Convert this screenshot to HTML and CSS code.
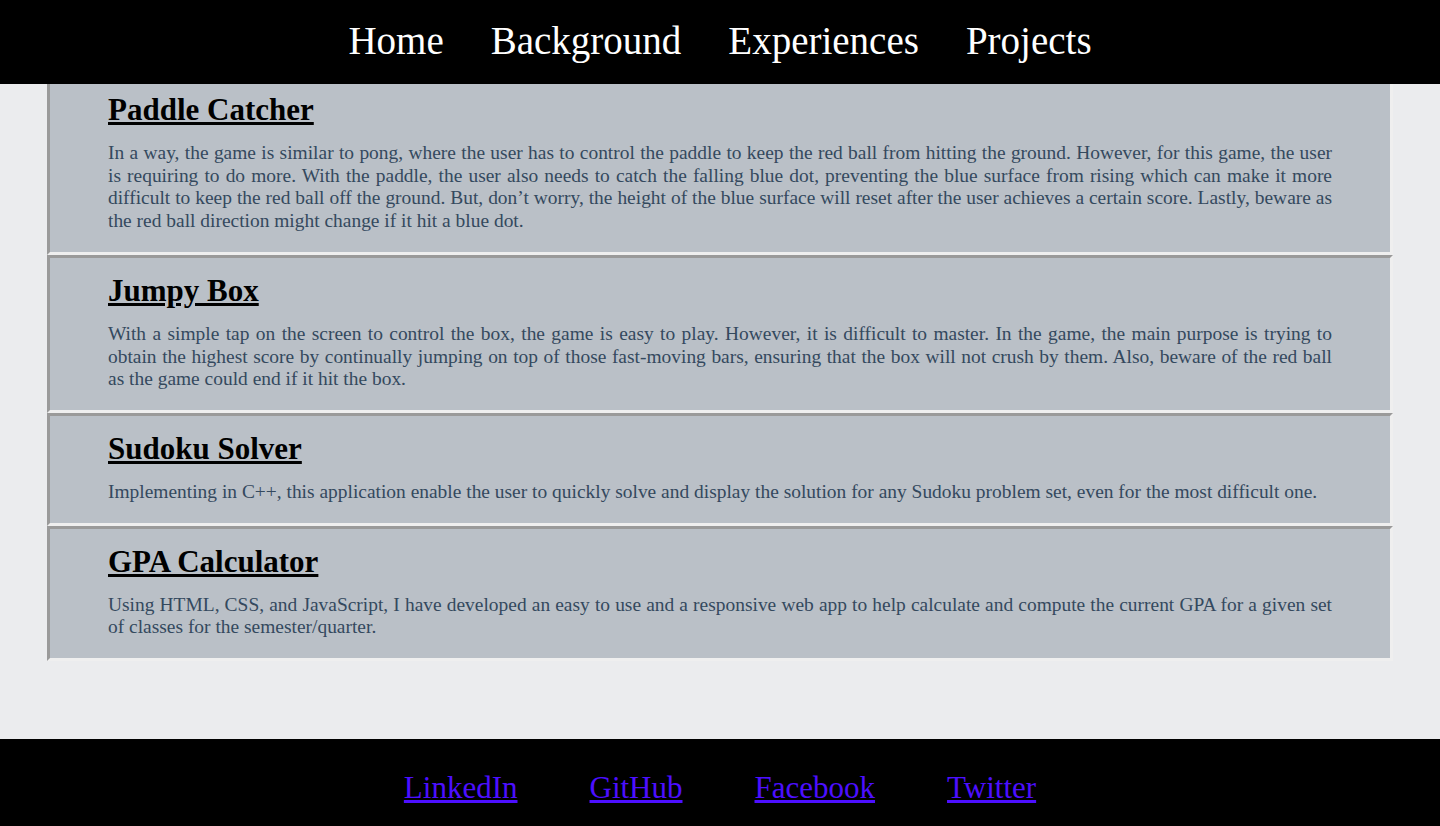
FILE: index.html
```html
<!DOCTYPE html>
<html lang="en">
<head>
<meta charset="utf-8">
<title>Projects</title>
<link rel="stylesheet" href="styles.css">
</head>
<body>
<nav class="topnav">
  <a class="topnav-link" href="#">Home</a>
  <a class="topnav-link" href="#">Background</a>
  <a class="topnav-link" href="#">Experiences</a>
  <a class="topnav-link" href="#">Projects</a>
</nav>
<main class="projects">
  <section class="project">
    <h2 class="project-title">Paddle Catcher</h2>
    <p class="project-text">In a way, the game is similar to pong, where the user has to control the paddle to keep the red ball from hitting the ground. However, for this game, the user is requiring to do more. With the paddle, the user also needs to catch the falling blue dot, preventing the blue surface from rising which can make it more difficult to keep the red ball off the ground. But, don’t worry, the height of the blue surface will reset after the user achieves a certain score. Lastly, beware as the red ball direction might change if it hit a blue dot.</p>
  </section>
  <section class="project">
    <h2 class="project-title">Jumpy Box</h2>
    <p class="project-text">With a simple tap on the screen to control the box, the game is easy to play. However, it is difficult to master. In the game, the main purpose is trying to obtain the highest score by continually jumping on top of those fast-moving bars, ensuring that the box will not crush by them. Also, beware of the red ball as the game could end if it hit the box.</p>
  </section>
  <section class="project">
    <h2 class="project-title">Sudoku Solver</h2>
    <p class="project-text">Implementing in C++, this application enable the user to quickly solve and display the solution for any Sudoku problem set, even for the most difficult one.</p>
  </section>
  <section class="project">
    <h2 class="project-title">GPA Calculator</h2>
    <p class="project-text">Using HTML, CSS, and JavaScript, I have developed an easy to use and a responsive web app to help calculate and compute the current GPA for a given set of classes for the semester/quarter.</p>
  </section>
</main>
<footer class="footer">
  <a class="footer-link" href="#">LinkedIn</a>
  <a class="footer-link" href="#">GitHub</a>
  <a class="footer-link" href="#">Facebook</a>
  <a class="footer-link" href="#">Twitter</a>
</footer>
</body>
</html>
```

FILE: styles.css
```css
html, body {
  margin: 0;
  padding: 0;
}

body {
  background: #ebecee;
  font-family: "Liberation Serif", "Times New Roman", serif;
  padding-top: 74px;
}

.topnav {
  position: fixed;
  top: 0;
  left: 0;
  right: 0;
  height: 84px;
  box-sizing: border-box;
  padding-top: 18px;
  background: #000;
  display: flex;
  justify-content: center;
  gap: 47px;
  z-index: 10;
}

.topnav-link {
  color: #fff;
  text-decoration: none;
  font-size: 39px;
  line-height: normal;
}

.projects {
  margin: 0 47px 78px;
  display: flex;
  flex-direction: column;
}

.project {
  background: #bac0c7;
  border: 3px solid;
  border-color: #9a9a9a #efefef #efefef #9a9a9a;
  padding: 0 58px;
}

.project-title {
  margin: 15px 0 0;
  font-size: 31px;
  line-height: 36px;
  font-weight: bold;
  color: #000;
  text-decoration: underline;
}

.project-text {
  margin: 14px 0 19px;
  font-size: 19.45px;
  line-height: 22.7px;
  color: #34495e;
  text-align: justify;
}

.footer {
  background: #000;
  height: 87px;
  box-sizing: border-box;
  padding-top: 31px;
  display: flex;
  justify-content: center;
  gap: 72px;
}

.footer-link {
  color: #4c0fff;
  font-size: 31px;
  line-height: normal;
  text-decoration: underline;
}
```
